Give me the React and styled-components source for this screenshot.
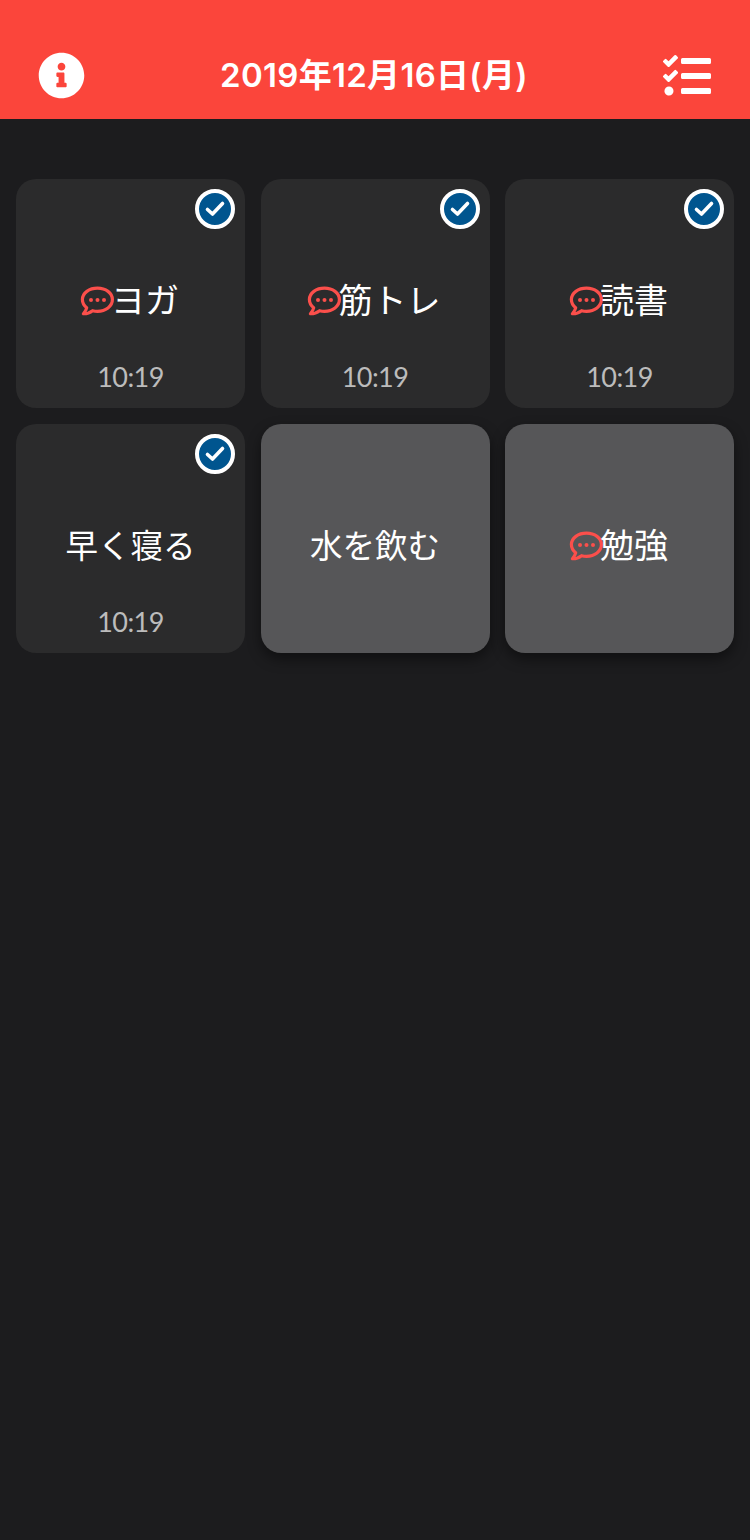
import React from "react";
import styled, { createGlobalStyle } from "styled-components";
import { FaInfoCircle, FaTasks } from "react-icons/fa";

const Global = createGlobalStyle`
  html, body { margin: 0; padding: 0; background: #1c1c1e; }
  body { font-family: "Noto Sans CJK JP", sans-serif; }
`;

const Page = styled.div`
  width: 750px;
  height: 1540px;
  background: #1c1c1e;
  overflow: hidden;
`;

const Header = styled.header`
  height: 119px;
  box-sizing: border-box;
  padding: 32px 39px 0 38px;
  background: #fb453b;
  display: flex;
  align-items: center;
  justify-content: space-between;
  color: #fff;
`;

const Title = styled.h1`
  margin: 0;
  font-family: Inter, "Noto Sans CJK JP", sans-serif;
  font-size: 33px;
  font-weight: 600;
  letter-spacing: 0.3px;
  line-height: 1;
`;

const Grid = styled.main`
  display: grid;
  grid-template-columns: repeat(3, 229px);
  gap: 16px 15.5px;
  padding: 60px 16px 0;
`;

const Card = styled.div`
  position: relative;
  height: 229px;
  box-sizing: border-box;
  padding-top: 98px;
  border-radius: 20px;
  background: ${(p) => (p.$done ? "#2b2b2c" : "#565658")};
  box-shadow: ${(p) => (p.$done ? "none" : "0 6px 14px rgba(0,0,0,0.45)")};
  display: flex;
  flex-direction: column;
  align-items: center;
`;

const Label = styled.div`
  height: 44px;
  display: flex;
  align-items: center;
  justify-content: center;
  color: #fff;
  font-size: ${(p) => (p.$note ? "34px" : "32.5px")};
  font-weight: 400;
  line-height: 44px;
  white-space: nowrap;
`;

const Time = styled.div`
  margin-top: 38px;
  height: 36px;
  line-height: 36px;
  font-family: Lato, sans-serif;
  font-size: 27px;
  font-weight: 400;
  letter-spacing: -0.6px;
  color: #bcbcbc;
`;

const Badge = styled.span`
  position: absolute;
  top: 10px;
  right: 10px;
  width: 40px;
  height: 40px;
  box-sizing: border-box;
  border: 4px solid #fff;
  border-radius: 50%;
  background: #00558f;
  display: flex;
  align-items: center;
  justify-content: center;
`;

const BubbleIcon = styled.svg`
  flex: none;
  width: 34px;
  height: 30px;
  margin: 4px -2.5px 0 -2.5px;
`;

const Check = () => (
  <svg width="24" height="24" viewBox="0 0 24 24" fill="none" stroke="#fff" strokeWidth="3.6" strokeLinecap="round" strokeLinejoin="round">
    <path d="M4.5 12.5 L9.5 17 L19.5 6.5" />
  </svg>
);

const Bubble = () => (
  <BubbleIcon viewBox="0 0 34 30" fill="none">
    <path
      d="M17.5 2.2C9.3 2.2 2.4 6.9 2.4 13.6c0 3.4 1.7 6.2 4.3 8.2-.4 2.2-1.6 4-3.3 5.9 3.1.1 6.6-1 9.2-3 1.5.4 3.1.6 4.9.6 8.2 0 14.9-5 14.9-11.7S25.7 2.2 17.5 2.2Z"
      stroke="#fb4f4b"
      strokeWidth="3.2"
      strokeLinejoin="round"
    />
    <circle cx="11" cy="14" r="2" fill="#fb4f4b" />
    <circle cx="17.5" cy="14" r="2" fill="#fb4f4b" />
    <circle cx="24" cy="14" r="2" fill="#fb4f4b" />
  </BubbleIcon>
);

const habits = [
  { name: "ヨガ", note: true, time: "10:19" },
  { name: "筋トレ", note: true, time: "10:19" },
  { name: "読書", note: true, time: "10:19" },
  { name: "早く寝る", note: false, time: "10:19" },
  { name: "水を飲む", note: false },
  { name: "勉強", note: true },
];

export default function App() {
  return (
    <Page>
      <Global />
      <Header>
        <FaInfoCircle size={47} />
        <Title>2019年12月16日(月)</Title>
        <FaTasks size={48} />
      </Header>
      <Grid>
        {habits.map((h) => (
          <Card key={h.name} $done={!!h.time}>
            {h.time && (
              <Badge>
                <Check />
              </Badge>
            )}
            <Label $note={h.note}>
              {h.note && <Bubble />}
              {h.name}
            </Label>
            {h.time && <Time>{h.time}</Time>}
          </Card>
        ))}
      </Grid>
    </Page>
  );
}
